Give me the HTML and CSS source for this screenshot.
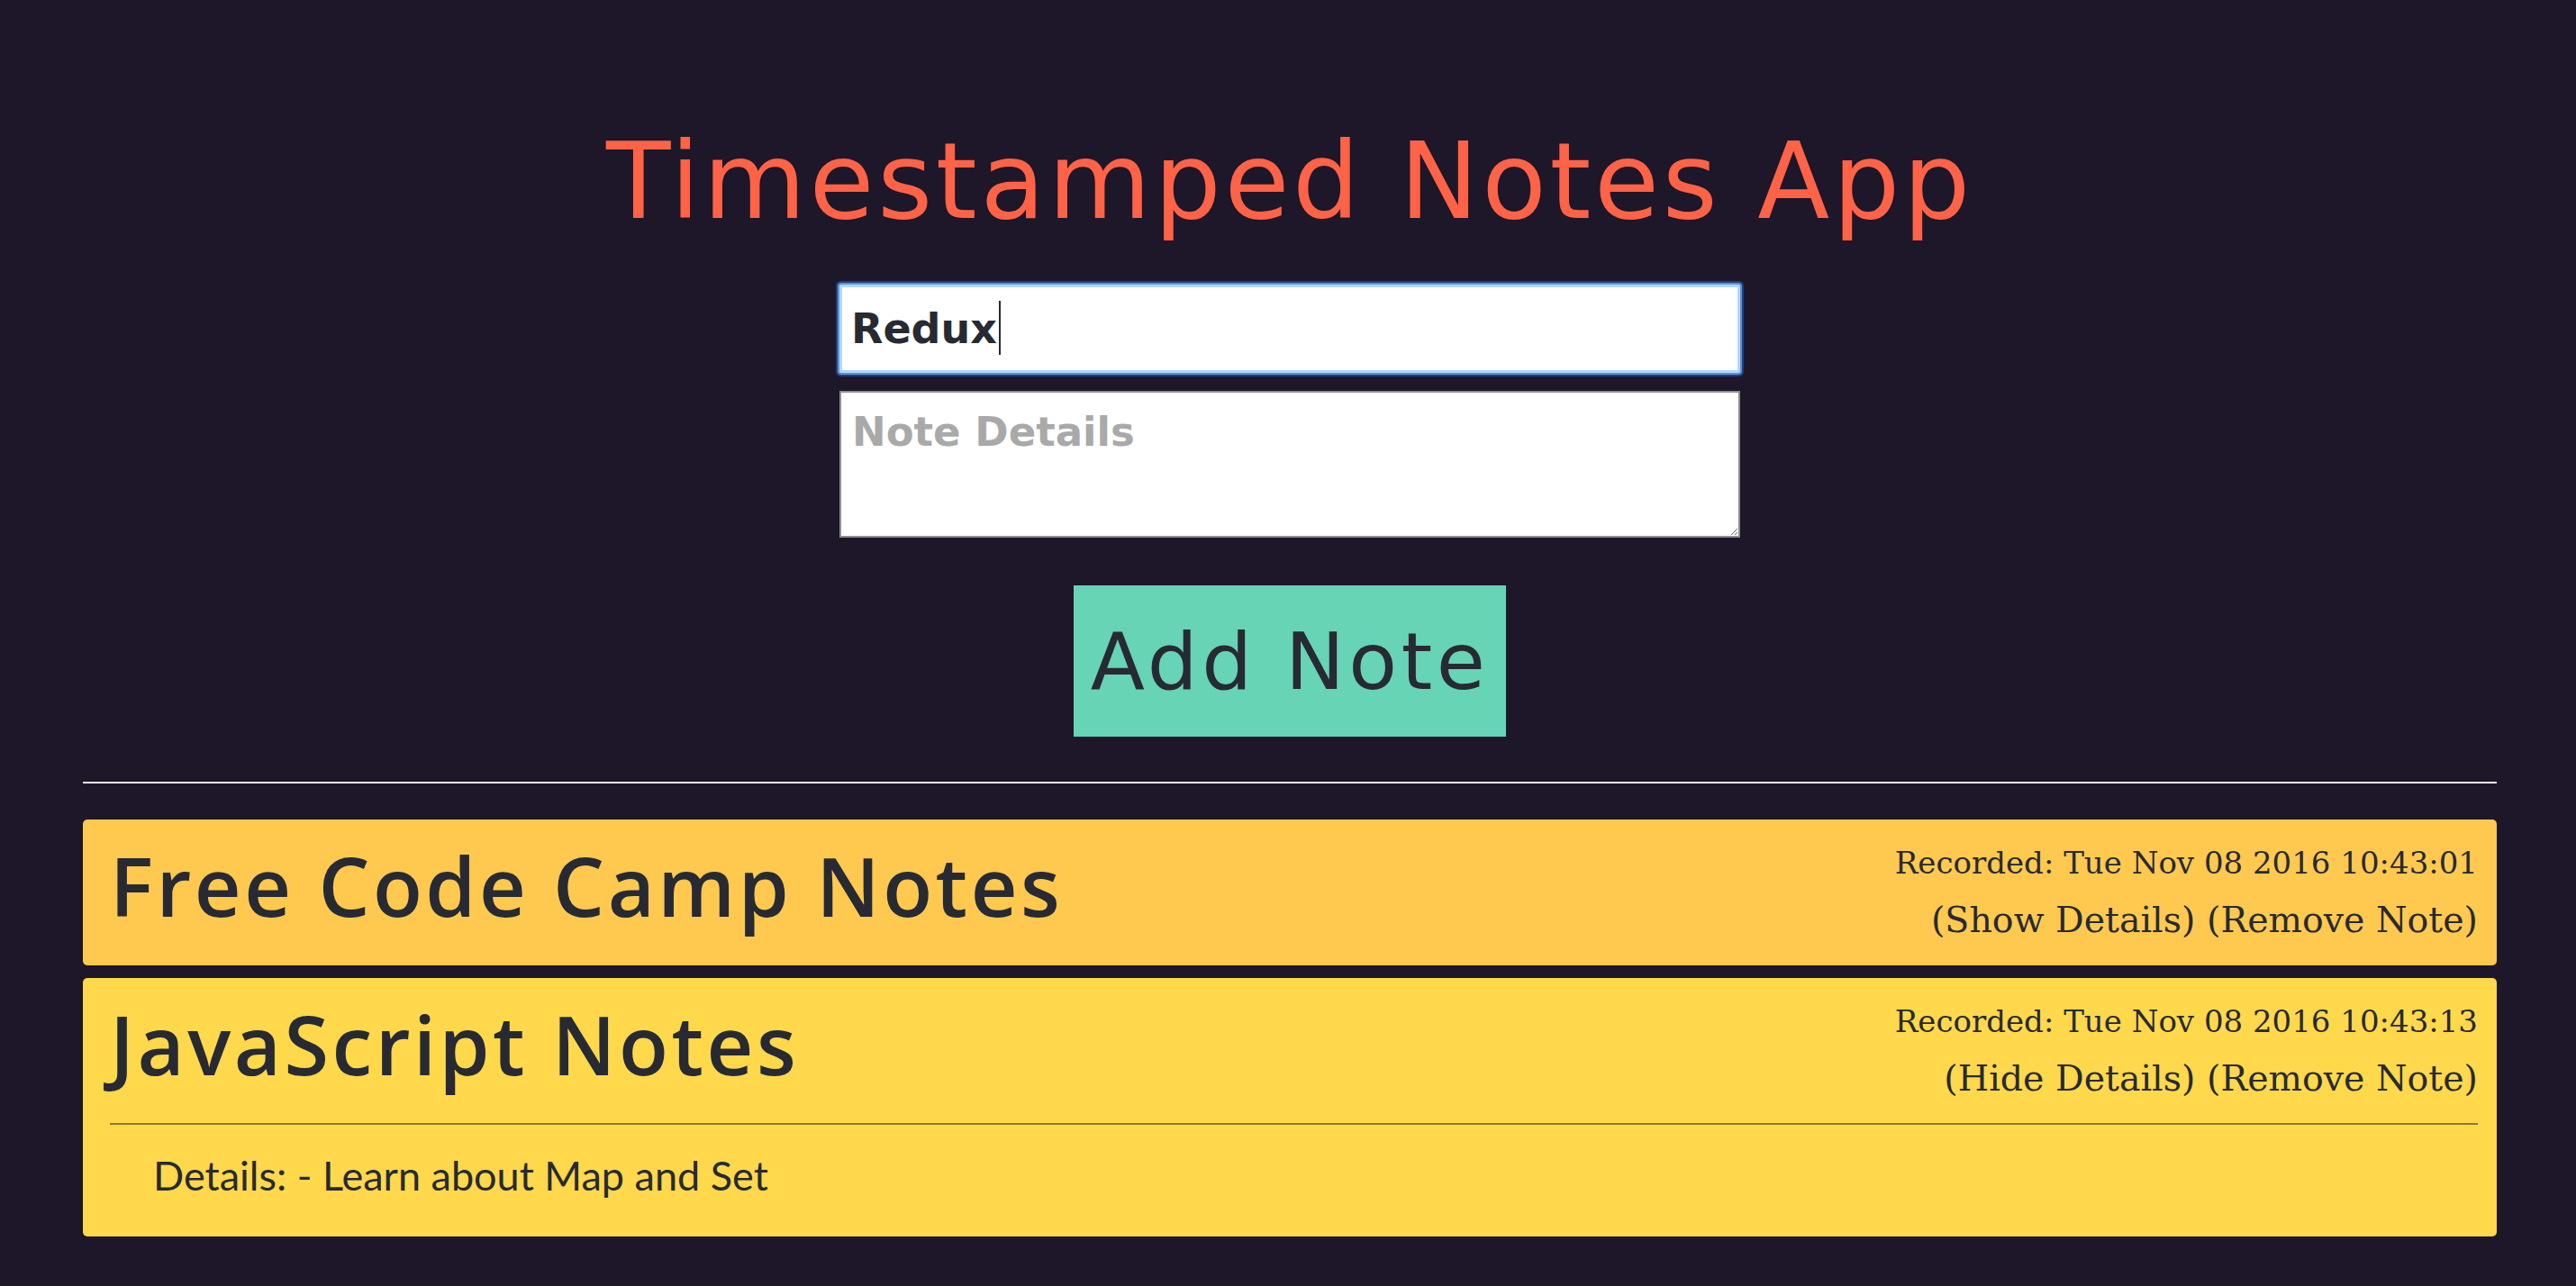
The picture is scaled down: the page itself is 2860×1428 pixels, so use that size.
FILE: index.html
```html
<!DOCTYPE html>
<html lang="en">
<head>
<meta charset="utf-8">
<title>Timestamped Notes App</title>
<link rel="stylesheet" href="styles.css">
</head>
<body>
<div class="app">
  <h1 class="app-title">Timestamped Notes App</h1>
  <form class="note-form">
    <div class="field">
      <input class="title-input" type="text" value="Redux">
      <span class="caret"></span>
    </div>
    <textarea class="details-input" placeholder="Note Details"></textarea>
    <button class="add-btn" type="button">Add Note</button>
  </form>
  <hr class="divider">
  <ul class="notes">
    <li class="note note-orange">
      <div class="note-head">
        <h2 class="note-name">Free Code Camp Notes</h2>
        <div class="note-meta">
          <div class="stamp">Recorded: Tue Nov 08 2016 10:43:01</div>
          <div class="actions"><span class="action">(Show Details)</span> <span class="action">(Remove Note)</span></div>
        </div>
      </div>
    </li>
    <li class="note note-yellow">
      <div class="note-head">
        <h2 class="note-name">JavaScript Notes</h2>
        <div class="note-meta">
          <div class="stamp">Recorded: Tue Nov 08 2016 10:43:13</div>
          <div class="actions"><span class="action">(Hide Details)</span> <span class="action">(Remove Note)</span></div>
        </div>
      </div>
      <hr class="note-rule">
      <p class="note-details">Details: - Learn about Map and Set</p>
    </li>
  </ul>
</div>
</body>
</html>
```
FILE: styles.css
```css
* { box-sizing: border-box; }

html, body {
  margin: 0;
  padding: 0;
  background: #1e1629;
}

body {
  font-family: "DejaVu Sans", sans-serif;
  color: #272a33;
}

.app {
  margin: 0 88px 0 92px;
  padding-top: 143px;
  padding-bottom: 40px;
}

.app-title {
  margin: 0;
  text-align: center;
  font-family: "DejaVu Sans", sans-serif;
  font-weight: normal;
  font-size: 117px;
  line-height: 117px;
  letter-spacing: 3.7px;
  color: #ff6347;
}

.note-form {
  margin: 56px 0 0;
  display: flex;
  flex-direction: column;
  align-items: center;
}

.field {
  position: relative;
  width: 1000px;
  height: 98px;
}

.title-input {
  display: block;
  width: 1000px;
  height: 98px;
  margin: 0;
  padding: 0 10px;
  border: 3px solid #b4d6fa;
  border-radius: 2px;
  box-shadow: 0 0 0 2px #5a93dd, 0 0 1px 4px rgba(38, 86, 160, 0.7);
  outline: none;
  background: #fff;
  font-family: "DejaVu Sans", sans-serif;
  font-weight: bold;
  font-size: 46px;
  color: #272a33;
}

.caret {
  position: absolute;
  left: 177px;
  top: 18px;
  width: 2px;
  height: 60px;
  background: #272a33;
}

.details-input {
  display: block;
  width: 1000px;
  height: 163px;
  margin: 20px 0 0;
  padding: 17px 12px;
  border: 2px solid #8e8e8e;
  border-radius: 0;
  background: #fff;
  font-family: "DejaVu Sans", sans-serif;
  font-weight: bold;
  font-size: 45px;
  color: #272a33;
}

.details-input::placeholder {
  color: #a9a9a9;
}

.add-btn {
  display: block;
  width: 480px;
  height: 168px;
  margin: 53px 0 0;
  padding: 0;
  border: none;
  background: #66d4b5;
  font-family: "DejaVu Sans", sans-serif;
  font-size: 88px;
  letter-spacing: 4.5px;
  color: #272a33;
}

.divider {
  height: 2px;
  margin: 50px 0 0;
  border: none;
  background: #eeeeee;
}

.notes {
  list-style: none;
  margin: 40px 0 0;
  padding: 0;
  display: flex;
  flex-direction: column;
  gap: 14px;
}

.note {
  border-radius: 5px;
  padding: 17px 21px 19px 30px;
}

.note-orange { background: #ffc94f; }
.note-yellow { background: #ffd84b; }

.note-head {
  display: flex;
  justify-content: space-between;
  align-items: flex-start;
}

.note-name {
  margin: 2px 0 0;
  font-family: "Open Sans", sans-serif;
  font-weight: 600;
  font-size: 90px;
  line-height: 108px;
  letter-spacing: 3.5px;
  color: #272a33;
}

.note-meta {
  text-align: right;
  font-family: "DejaVu Serif", serif;
  font-size: 34px;
  line-height: 63px;
  color: #272a33;
}

.actions {
  font-size: 39.5px;
}

.action { cursor: pointer; }

.note-rule {
  height: 2px;
  margin: 18px 0 0;
  border: none;
  background: #8a7a30;
}

.note-details {
  margin: 29px 0 22px 48px;
  font-family: "Lato", sans-serif;
  font-size: 45px;
  line-height: 1.2;
  color: #272a33;
}
```
